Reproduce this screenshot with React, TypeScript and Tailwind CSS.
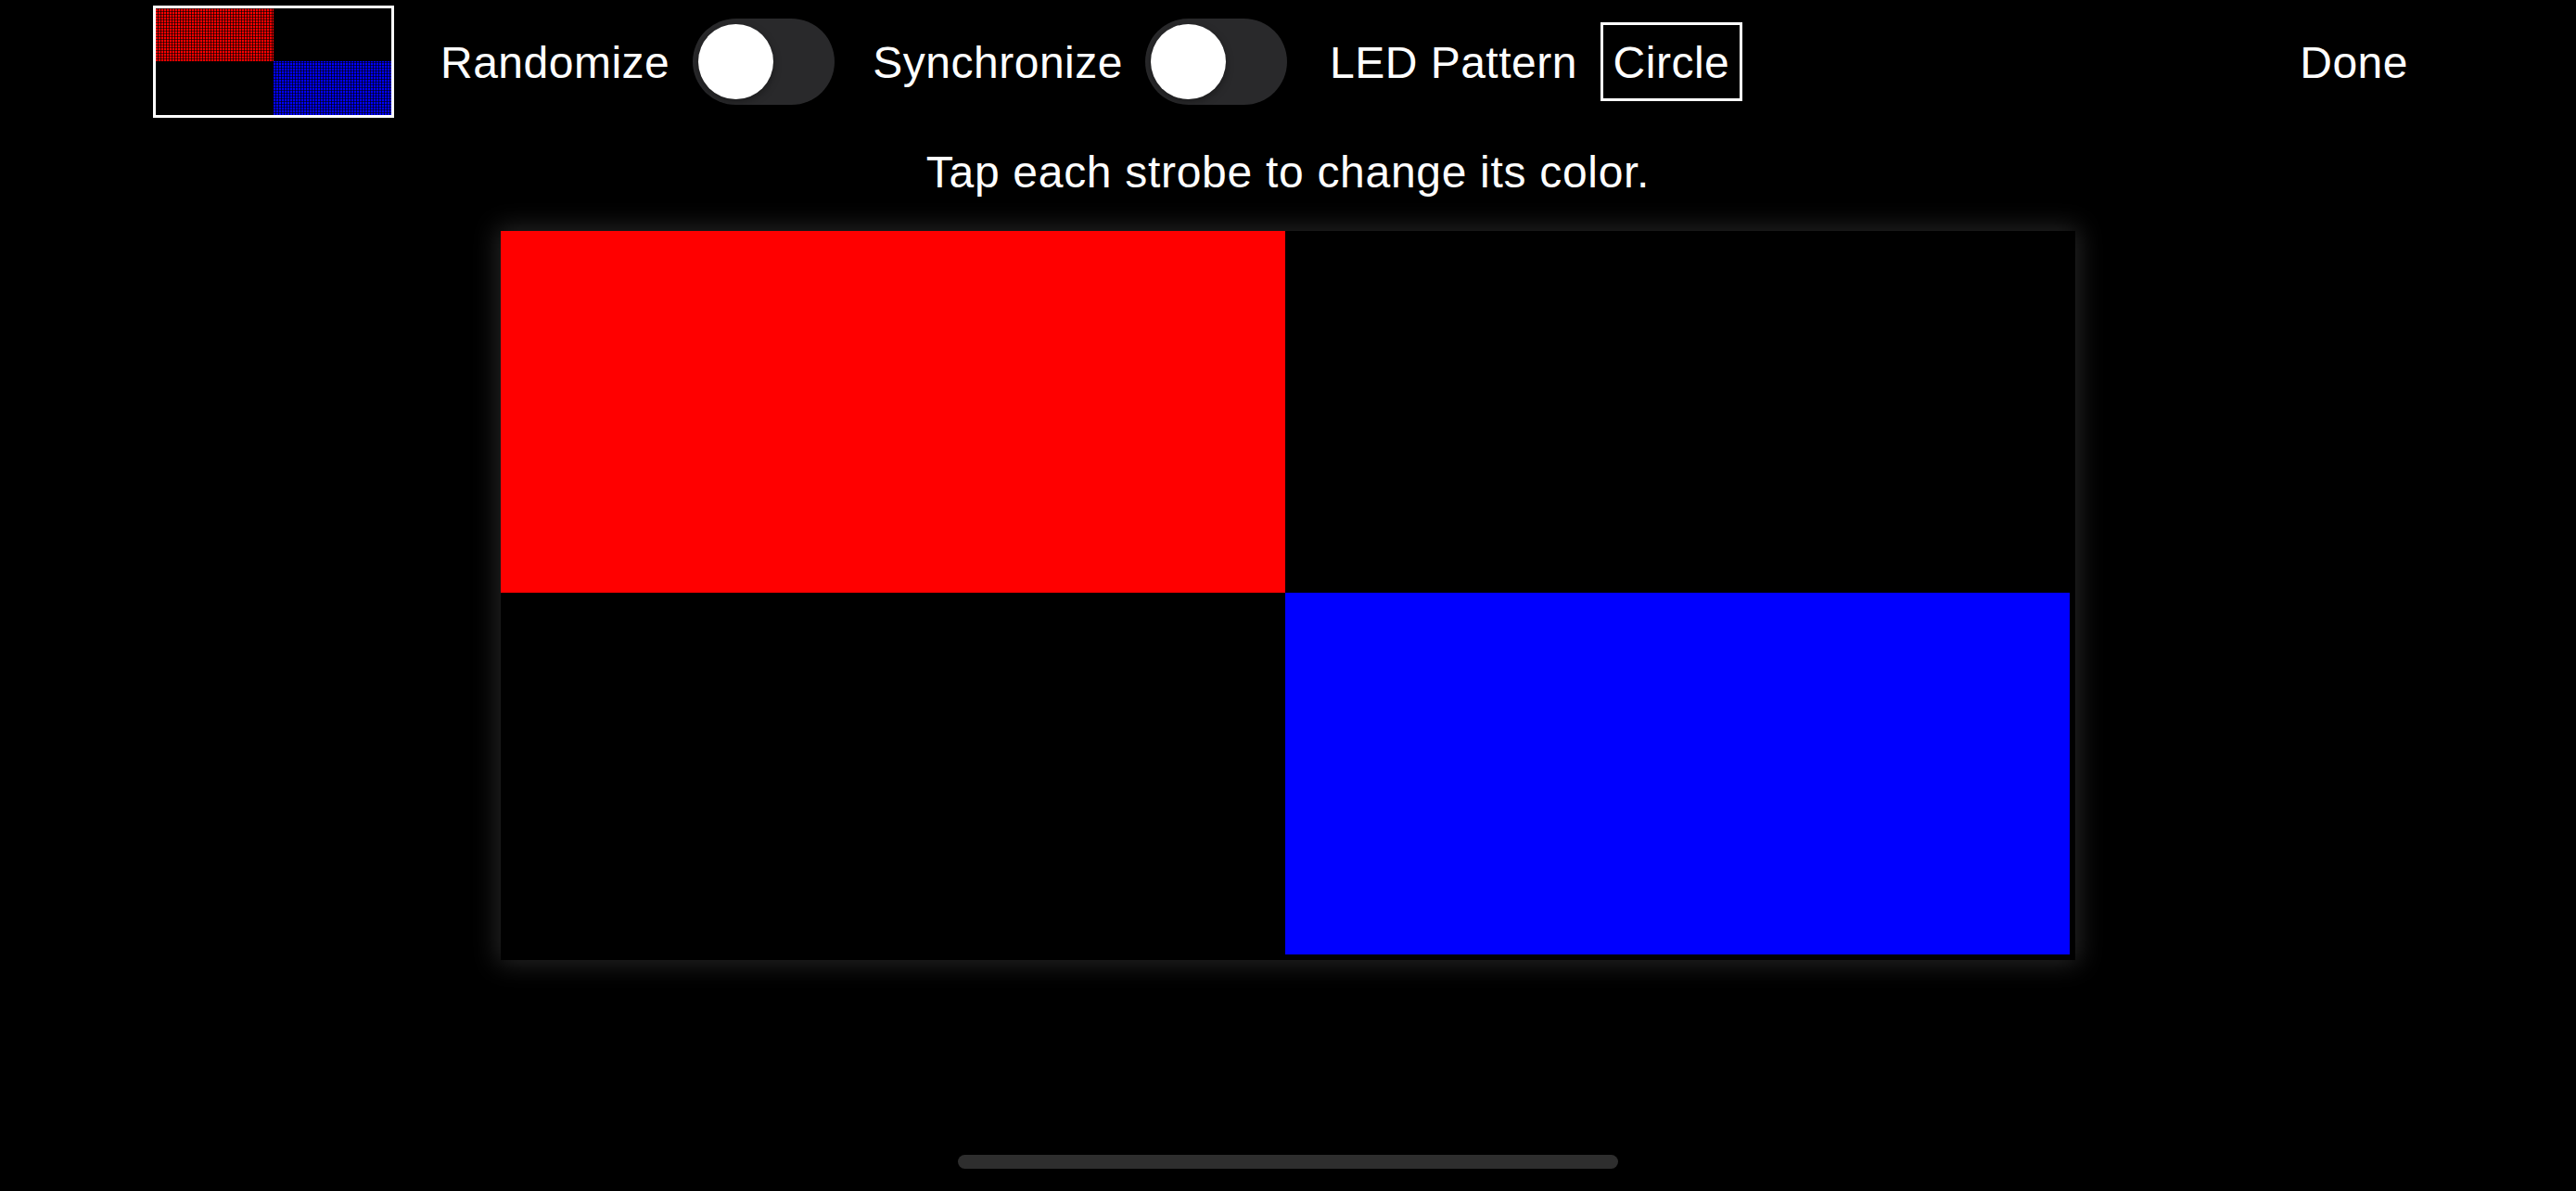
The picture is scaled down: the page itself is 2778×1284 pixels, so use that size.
import React from "react";

const font = "font-['Liberation_Sans',Arial,sans-serif]";

function Toggle() {
  return (
    <div className="flex h-[93px] w-[153px] shrink-0 items-center rounded-full bg-[#29292b] px-[6px]">
      <div className="h-[81px] w-[81px] rounded-full bg-white shadow-[0_3px_8px_rgba(0,0,0,0.35)]" />
    </div>
  );
}

function Thumb() {
  return (
    <div className="grid h-[121px] w-[260px] shrink-0 grid-cols-2 grid-rows-2 border-[3px] border-white bg-black">
      <div className="bg-[#ff0000] [background-image:repeating-linear-gradient(90deg,transparent_0_2px,rgba(0,0,0,0.7)_2px_3px),repeating-linear-gradient(0deg,transparent_0_2px,rgba(0,0,0,0.6)_2px_3px)]" />
      <div className="bg-black" />
      <div className="bg-black" />
      <div className="bg-[#0000ff] [background-image:repeating-linear-gradient(90deg,transparent_0_2px,rgba(0,0,0,0.7)_2px_3px),repeating-linear-gradient(0deg,transparent_0_2px,rgba(0,0,0,0.6)_2px_3px)]" />
    </div>
  );
}

export default function App() {
  return (
    <div className={`${font} flex h-[1284px] w-full flex-col items-center overflow-hidden bg-black text-white`}>
      {/* top bar */}
      <div className="flex h-[132px] w-full items-center pl-[165px] pr-[181px] text-[48px] leading-none tracking-[0.5px]">
        <Thumb />
        <span className="ml-[50px] pt-[3px]">Randomize</span>
        <div className="ml-[25px]">
          <Toggle />
        </div>
        <span className="ml-[41px] pt-[3px]">Synchronize</span>
        <div className="ml-[24px]">
          <Toggle />
        </div>
        <span className="ml-[46px] pt-[3px]">LED Pattern</span>
        <div className="ml-[25px] flex h-[85px] w-[153px] items-center justify-center border-[3px] border-white pt-[3px]">
          Circle
        </div>
        <span className="ml-auto pt-[3px]">Done</span>
      </div>

      {/* subtitle */}
      <div className="mt-[26px] h-[56px] text-[48px] leading-[56px] tracking-[0.7px]">
        Tap each strobe to change its color.
      </div>

      {/* strobe grid */}
      <div className="mt-[35px] w-[1698px] bg-black pb-[6px] pr-[6px] shadow-[0_0_26px_4px_rgba(255,255,255,0.15)]">
        <div className="grid grid-cols-[846px_846px] grid-rows-[390px_390px]">
          <div className="bg-[#ff0000]" />
          <div className="bg-black" />
          <div className="bg-black" />
          <div className="bg-[#0000ff]" />
        </div>
      </div>

      {/* home indicator */}
      <div className="mt-[210px] h-[15px] w-[712px] rounded-full bg-[#2e2e2e]" />
    </div>
  );
}
